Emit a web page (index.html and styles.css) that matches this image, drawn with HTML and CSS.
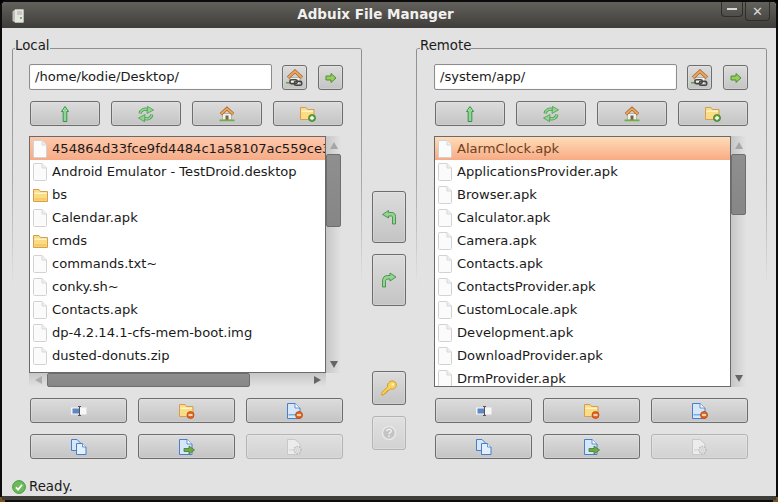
FILE: index.html
```html
<!DOCTYPE html>
<html lang="en">

<head>
    <meta charset="UTF-8">
    <title>Adbuix File Manager</title>
    <link rel="stylesheet" href="styles.css">
</head>

<body>
    <!-- icon set, used through <use> below -->
    <svg class="icon_defs" xmlns="http://www.w3.org/2000/svg">
        <symbol id="i_file" viewBox="0 0 14 18">
            <path d="M1 .5H9L13.500 5V16.500a1 1 0 0 1-1 1H1.500a1 1 0 0 1-1-1V1.500a1 1 0 0 1 .5-1z" fill="#fbfbfb" stroke="#d2d2d2"/>
            <path d="M9 .5V5H13.500" fill="#efefef" stroke="#d8d8d8"/>
        </symbol>
        <symbol id="i_folder" viewBox="0 0 15 14">
            <path d="M.5 1.500H6L7.500 3.500H14.500V13.500H.5z" fill="#f9dc84" stroke="#d49f52"/>
            <path d="M1.500 4.500H13.500V6H1.500z" fill="#fff3c8"/>
            <path d="M1.500 10H13.500V12.500H1.500z" fill="#f5cb62"/>
        </symbol>
        <symbol id="i_home" viewBox="0 0 16 16">
            <path d="M3.500 7.500H12.500V14H3.500z" fill="#f2f0ea" stroke="#b5b1a6"/>
            <path d="M6.500 9.500H9.500V14H6.500z" fill="#7a644a"/>
            <path d="M1.800 8.200L8 2.500L14.200 8.200" fill="none" stroke="#a9652a" stroke-width="3.200"/>
            <path d="M2 8L8 2.600L14 8" fill="none" stroke="#eaa860" stroke-width="1.800"/>
            <path d="M.5 13.500H15.500V15.200H.5z" fill="#6fae4a"/>
        </symbol>
        <symbol id="i_home_link" viewBox="0 0 16 16">
            <path d="M3.500 7.500H12.500V14H3.500z" fill="#f2f0ea" stroke="#b5b1a6"/>
            <path d="M1.800 7.700L8 2L14.200 7.700" fill="none" stroke="#a9652a" stroke-width="3"/>
            <path d="M2 7.500L8 2.100L14 7.500" fill="none" stroke="#eaa860" stroke-width="1.700"/>
            <path d="M0 11.500H4V12.800H0z" fill="#5fa044"/>
            <rect x="3.500" y="9.500" width="6.500" height="3.500" rx="1.500" fill="none" stroke="#454545" stroke-width="1.400"/>
            <rect x="7.500" y="11" width="6.500" height="3.500" rx="1.500" fill="none" stroke="#454545" stroke-width="1.400"/>
        </symbol>
        <symbol id="i_right" viewBox="0 0 16 16">
            <path d="M3 6H8V3.500L13 8L8 12.500V10H3z" fill="#97cc5e" stroke="#4f8f33" stroke-linejoin="round"/>
        </symbol>
        <symbol id="i_up" viewBox="0 0 16 16">
            <path d="M8 .5L11.500 5.500H9.800V15.500H6.200V5.500H4.500z" fill="#b4e4b0" stroke="#2f8f45" stroke-linejoin="round"/>
            <path d="M8 3V15" stroke="#7cc888" stroke-width="1.200"/>
        </symbol>
        <symbol id="i_refresh" viewBox="0 0 16 16">
            <path d="M2.200 7.500C2.500 4.200 6 2.300 10 3.500" fill="none" stroke="#4a9e52" stroke-width="3.200"/>
            <path d="M2.200 7.500C2.500 4.200 6 2.300 10 3.500" fill="none" stroke="#93d48e" stroke-width="1.600"/>
            <path d="M9.500 .3L15.500 4L9 7.500z" fill="#93d48e" stroke="#4a9e52" stroke-width=".8" stroke-linejoin="round"/>
            <path d="M13.800 8.500C13.500 11.800 10 13.700 6 12.500" fill="none" stroke="#4a9e52" stroke-width="3.200"/>
            <path d="M13.800 8.500C13.500 11.800 10 13.700 6 12.500" fill="none" stroke="#93d48e" stroke-width="1.600"/>
            <path d="M6.500 15.700L.5 12L7 8.500z" fill="#93d48e" stroke="#4a9e52" stroke-width=".8" stroke-linejoin="round"/>
        </symbol>
        <symbol id="i_folder_add" viewBox="0 0 16 16">
            <path d="M.5 1.500H6L7.500 3.500H14V13.500H.5z" fill="#f9dc84" stroke="#d49f52"/>
            <path d="M1.500 4.500H13V6H1.500z" fill="#fff3c8"/>
            <circle cx="12" cy="12" r="3.500" fill="#63a845" stroke="#3f7f2b" stroke-width=".8"/>
            <path d="M10 12H14M12 10V14" stroke="#fff" stroke-width="1.300"/>
        </symbol>
        <symbol id="i_folder_del" viewBox="0 0 16 16">
            <path d="M.5 1.500H6L7.500 3.500H14V13.500H.5z" fill="#f9dc84" stroke="#d49f52"/>
            <path d="M1.500 4.500H13V6H1.500z" fill="#fff3c8"/>
            <circle cx="11.500" cy="12" r="3.500" fill="#e8661e" stroke="#b5480f" stroke-width=".8"/>
            <path d="M9.500 12H13.500" stroke="#fff" stroke-width="1.400"/>
        </symbol>
        <symbol id="i_rename" viewBox="0 0 16 16">
            <path d="M0 4.500H15.500V11.500H0z" fill="#f6f6f6"/>
            <path d="M1.500 5.500H8V10.500H1.500z" fill="#5f86c4"/>
            <path d="M7 3.500H10M8.500 3.500V12.500M7 12.500H10" stroke="#555" fill="none"/>
        </symbol>
        <symbol id="i_doc_del" viewBox="0 0 16 16">
            <path d="M.5 .5H8L13 5V15.500H.5z" fill="#d6e7fa" stroke="#4a7fc8"/>
            <path d="M1.500 11H11V12.500H1.500z" fill="#79ade4"/>
            <path d="M8 .5V5H13" fill="#f5f9ff" stroke="#4a7fc8" stroke-width=".8"/>
            <circle cx="12" cy="12" r="3.500" fill="#e8661e" stroke="#b5480f" stroke-width=".8"/>
            <path d="M10 12H14" stroke="#fff" stroke-width="1.400"/>
        </symbol>
        <symbol id="i_copy" viewBox="0 0 16 16">
            <path d="M.5 .5H6L9.500 4V11.500H.5z" fill="#d6e7fa" stroke="#4a7fc8"/>
            <path d="M5.500 4.500H11.500L15 8V15.500H5.500z" fill="#e2effc" stroke="#4a7fc8"/>
            <path d="M11.500 4.500V8H15" fill="#f5f9ff" stroke="#4a7fc8" stroke-width=".8"/>
        </symbol>
        <symbol id="i_doc_move" viewBox="0 0 16 16">
            <path d="M.5 .5H8L13 5V15.500H.5z" fill="#d6e7fa" stroke="#4a7fc8"/>
            <path d="M8 .5V5H13" fill="#f5f9ff" stroke="#4a7fc8" stroke-width=".8"/>
            <path d="M5 9.500H10V7L15.500 11L10 15V12.500H5z" fill="#73a84a" stroke="#3f7f2b" stroke-width=".8" stroke-linejoin="round"/>
        </symbol>
        <symbol id="i_doc_gear" viewBox="0 0 16 16">
            <path d="M.5 .5H8L13 5V15.500H.5z" fill="#ececec" stroke="#c8c8c8"/>
            <circle cx="10.500" cy="11" r="3.500" fill="#e2e2e2" stroke="#bdbdbd" stroke-width="1.500" stroke-dasharray="1.500 1"/>
            <circle cx="10.500" cy="11" r="1.200" fill="#f2f2f2" stroke="#c4c4c4" stroke-width=".7"/>
            <path d="M2 11H6" stroke="#cfcfcf"/>
        </symbol>
        <symbol id="i_key" viewBox="0 0 16 16">
            <path d="M.8 12.500L6.500 7C6 4 8 1.500 10.500 1C13.500 .6 15.500 2.800 15.300 5.300C15 8 12.500 10 9.500 8.800L8 10.300H6.500V11.800H5V13.300H3.500L2.500 15H.8z" fill="#f8d25e" stroke="#d39a2a" stroke-linejoin="round"/>
            <circle cx="11.800" cy="4.500" r="1.300" fill="#fff3c0"/>
        </symbol>
        <symbol id="i_help" viewBox="0 0 16 16">
            <circle cx="8" cy="8" r="6.500" fill="#c4c4c4" stroke="#e8e8e8" stroke-width="1.500"/>
            <path d="M5.800 6.300C5.800 4.900 6.800 4.200 8 4.200S10.200 5 10.200 6.200C10.200 7.700 8 7.700 8 9.300" fill="none" stroke="#efefef" stroke-width="1.500"/>
            <path d="M7.200 10.500H8.800V12H7.200z" fill="#efefef"/>
        </symbol>
        <symbol id="i_turn_left" viewBox="0 0 16 16">
            <path d="M7.500 1.500L1.500 5.500L7.500 9V7H10.500C11 7 11.500 7.500 11.500 8V15H14.500V7.500C14.500 5 13 3.500 11 3.500H7.500z" fill="#93d48e" stroke="#37853f" stroke-width=".8" stroke-linejoin="round"/>
        </symbol>
        <symbol id="i_turn_right" viewBox="0 0 16 16">
            <path d="M9 1L15 5L9 9V7H7C5.500 7 4.500 8 4.500 9.500V15H1.500V9C1.500 5.500 3.500 3.500 6.500 3.500H9z" fill="#93d48e" stroke="#37853f" stroke-width=".8" stroke-linejoin="round"/>
        </symbol>
        <symbol id="i_ok" viewBox="0 0 16 16">
            <circle cx="8" cy="8" r="7.300" fill="#6cbb5a" stroke="#3f8f3a"/>
            <path d="M4.500 8.500L7 11L11.500 5.500" fill="none" stroke="#fff" stroke-width="2"/>
        </symbol>
        <symbol id="i_app" viewBox="0 0 12 14">
            <path d="M.5 2.500L3 .5H11.500V13.500H3L.5 12z" fill="#c2c2bd"/>
            <path d="M3 .5H11.500V13.500H3z" fill="#e6e6e1"/>
            <path d="M5 3H10M5 5H10" stroke="#a9a9a4"/>
            <path d="M8 8H10V10H8z" fill="#7fae6a"/>
        </symbol>
    </svg>

    <div class="window">
        <div class="titlebar">
            <svg class="app_icon"><use href="#i_app"/></svg>
            <div class="title">Adbuix File Manager</div>
            <div class="win_btn win_min"><span class="min_glyph"></span></div>
            <div class="win_btn win_close">&#10005;</div>
        </div>

        <div class="main">
            <section class="group">
                <div class="group_title">Local</div>
                <div class="path_row">
                    <div class="path_entry">/home/kodie/Desktop/</div>
                    <button class="btn small_btn"><svg class="ic_link"><use href="#i_home_link"/></svg></button>
                    <button class="btn small_btn"><svg class="ic"><use href="#i_right"/></svg></button>
                </div>
                <div class="nav_row">
                    <button class="btn"><svg class="ic"><use href="#i_up"/></svg></button>
                    <button class="btn"><svg class="ic"><use href="#i_refresh"/></svg></button>
                    <button class="btn"><svg class="ic"><use href="#i_home"/></svg></button>
                    <button class="btn"><svg class="ic"><use href="#i_folder_add"/></svg></button>
                </div>
                <div class="browser">
                    <div class="list">
                        <div class="row row_sel_local"><svg class="ic_file"><use href="#i_file"/></svg>454864d33fce9fd4484c1a58107ac559ce30</div>
                        <div class="row"><svg class="ic_file"><use href="#i_file"/></svg>Android Emulator - TestDroid.desktop</div>
                        <div class="row"><svg class="ic_folder"><use href="#i_folder"/></svg>bs</div>
                        <div class="row"><svg class="ic_file"><use href="#i_file"/></svg>Calendar.apk</div>
                        <div class="row"><svg class="ic_folder"><use href="#i_folder"/></svg>cmds</div>
                        <div class="row"><svg class="ic_file"><use href="#i_file"/></svg>commands.txt~</div>
                        <div class="row"><svg class="ic_file"><use href="#i_file"/></svg>conky.sh~</div>
                        <div class="row"><svg class="ic_file"><use href="#i_file"/></svg>Contacts.apk</div>
                        <div class="row"><svg class="ic_file"><use href="#i_file"/></svg>dp-4.2.14.1-cfs-mem-boot.img</div>
                        <div class="row"><svg class="ic_file"><use href="#i_file"/></svg>dusted-donuts.zip</div>
                    </div>
                    <div class="vscroll">
                        <div class="arrow_box_v"><span class="arrow arrow_up"></span></div>
                        <div class="thumb" style="height: 73px"></div>
                        <div class="spacer"></div>
                        <div class="arrow_box_v"><span class="arrow arrow_down"></span></div>
                    </div>
                    <div class="hscroll">
                        <div class="arrow_box_h"><span class="arrow arrow_left"></span></div>
                        <div class="thumb" style="width: 203px"></div>
                        <div class="spacer"></div>
                        <div class="arrow_box_h"><span class="arrow arrow_right"></span></div>
                    </div>
                </div>
                <div class="action_row">
                    <button class="btn"><svg class="ic"><use href="#i_rename"/></svg></button>
                    <button class="btn"><svg class="ic"><use href="#i_folder_del"/></svg></button>
                    <button class="btn"><svg class="ic"><use href="#i_doc_del"/></svg></button>
                    <button class="btn"><svg class="ic"><use href="#i_copy"/></svg></button>
                    <button class="btn"><svg class="ic"><use href="#i_doc_move"/></svg></button>
                    <button class="btn btn_off"><svg class="ic"><use href="#i_doc_gear"/></svg></button>
                </div>
            </section>

            <div class="middle">
                <button class="btn mid_btn"><svg class="ic"><use href="#i_turn_left"/></svg></button>
                <button class="btn mid_btn"><svg class="ic"><use href="#i_turn_right"/></svg></button>
                <button class="btn square_btn first_square"><svg class="ic"><use href="#i_key"/></svg></button>
                <button class="btn btn_off square_btn"><svg class="ic"><use href="#i_help"/></svg></button>
            </div>

            <section class="group group_remote">
                <div class="group_title">Remote</div>
                <div class="path_row">
                    <div class="path_entry">/system/app/</div>
                    <button class="btn small_btn"><svg class="ic_link"><use href="#i_home_link"/></svg></button>
                    <button class="btn small_btn"><svg class="ic"><use href="#i_right"/></svg></button>
                </div>
                <div class="nav_row">
                    <button class="btn"><svg class="ic"><use href="#i_up"/></svg></button>
                    <button class="btn"><svg class="ic"><use href="#i_refresh"/></svg></button>
                    <button class="btn"><svg class="ic"><use href="#i_home"/></svg></button>
                    <button class="btn"><svg class="ic"><use href="#i_folder_add"/></svg></button>
                </div>
                <div class="browser">
                    <div class="list">
                        <div class="row row_sel_remote"><svg class="ic_file"><use href="#i_file"/></svg>AlarmClock.apk</div>
                        <div class="row"><svg class="ic_file"><use href="#i_file"/></svg>ApplicationsProvider.apk</div>
                        <div class="row"><svg class="ic_file"><use href="#i_file"/></svg>Browser.apk</div>
                        <div class="row"><svg class="ic_file"><use href="#i_file"/></svg>Calculator.apk</div>
                        <div class="row"><svg class="ic_file"><use href="#i_file"/></svg>Camera.apk</div>
                        <div class="row"><svg class="ic_file"><use href="#i_file"/></svg>Contacts.apk</div>
                        <div class="row"><svg class="ic_file"><use href="#i_file"/></svg>ContactsProvider.apk</div>
                        <div class="row"><svg class="ic_file"><use href="#i_file"/></svg>CustomLocale.apk</div>
                        <div class="row"><svg class="ic_file"><use href="#i_file"/></svg>Development.apk</div>
                        <div class="row"><svg class="ic_file"><use href="#i_file"/></svg>DownloadProvider.apk</div>
                        <div class="row"><svg class="ic_file"><use href="#i_file"/></svg>DrmProvider.apk</div>
                    </div>
                    <div class="vscroll">
                        <div class="arrow_box_v"><span class="arrow arrow_up"></span></div>
                        <div class="thumb" style="height: 61px"></div>
                        <div class="spacer"></div>
                        <div class="arrow_box_v"><span class="arrow arrow_down"></span></div>
                    </div>
                </div>
                <div class="action_row">
                    <button class="btn"><svg class="ic"><use href="#i_rename"/></svg></button>
                    <button class="btn"><svg class="ic"><use href="#i_folder_del"/></svg></button>
                    <button class="btn"><svg class="ic"><use href="#i_doc_del"/></svg></button>
                    <button class="btn"><svg class="ic"><use href="#i_copy"/></svg></button>
                    <button class="btn"><svg class="ic"><use href="#i_doc_move"/></svg></button>
                    <button class="btn btn_off"><svg class="ic"><use href="#i_doc_gear"/></svg></button>
                </div>
            </section>
        </div>

        <div class="statusbar">
            <svg class="ic_status"><use href="#i_ok"/></svg>
            <span>Ready.</span>
        </div>
        <div class="bottom_edge"></div>
    </div>
    <span class="grip grip_left"></span>
    <span class="grip grip_right"></span>
</body>

</html>
```
FILE: styles.css
```css
* {
    box-sizing: border-box;
}

html, body {
    margin: 0;
    height: 100%;
    background: #000;
}

body {
    position: relative;
    font-family: "DejaVu Sans", sans-serif;
    font-size: 13.1px;
    color: #1a1a1a;
    overflow: hidden;
}

.icon_defs {
    display: none;
}

.window {
    width: 778px;
    height: 502px;
    display: flex;
    flex-direction: column;
    border: 2px solid #0c0c0c;
    border-radius: 6px 6px 0 0;
    background: #e2e2e2;
    overflow: hidden;
}

/* title bar */
.titlebar {
    flex: none;
    height: 26px;
    display: flex;
    align-items: flex-start;
    padding: 0 6px 0 10px;
    background: linear-gradient(to bottom, #62615c 0%, #3e3d39 100%);
}

.app_icon {
    flex: none;
    width: 12px;
    height: 14px;
    margin: 7px 6px 0 0;
}

.title {
    flex: 1;
    text-align: center;
    color: #f2f1ef;
    font-size: 13.5px;
    font-weight: bold;
    line-height: 25px;
}

.win_btn {
    flex: none;
    display: flex;
    align-items: center;
    justify-content: center;
    border: 1px solid #2f2e2b;
    border-top: 0;
    border-radius: 0 0 4px 4px;
    color: #d8d8d6;
}

.win_min {
    width: 22px;
    height: 15px;
    margin-right: 2px;
}

.min_glyph {
    display: block;
    width: 10px;
    height: 2px;
    background: #d8d8d6;
}

.win_close {
    width: 25px;
    height: 19px;
    font-size: 13px;
}

/* main area */
.main {
    flex: 1;
    display: grid;
    grid-template-columns: 350px 54px 351px;
    padding: 20px 0 0 10px;
}

.group {
    height: 423px;
    padding-left: 17px;
    border-top: 1px solid #8f8f8f;
    border-radius: 3px 3px 0 0;
    background-image: linear-gradient(to bottom, #8f8f8f 0%, #a8a8a8 55%, rgba(168, 168, 168, 0) 100%), linear-gradient(to bottom, #8f8f8f 0%, #a8a8a8 55%, rgba(168, 168, 168, 0) 100%);
    background-size: 1px 237px;
    background-position: left top, right top;
    background-repeat: no-repeat;
}

.group_remote {
    padding-left: 18px;
}

.group_title {
    display: table;
    margin: -11px 0 0 -14px;
    background: #e2e2e2;
    font-size: 13.33px;
    line-height: 16px;
    height: 16px;
}

.group_remote .group_title {
    margin-left: -14px;
}

.path_row {
    display: flex;
    align-items: flex-end;
    gap: 10px;
    width: 314px;
    margin-top: 10px;
}

.path_entry {
    width: 243px;
    height: 26px;
    padding-left: 5px;
    border: 1px solid #8d8d8d;
    border-radius: 2px;
    background: #fff;
    line-height: 24px;
    box-shadow: inset 0 0 0 1px #fafafa;
}

.path_row .small_btn:last-child {
    margin-left: 1px;
}

.btn {
    display: flex;
    align-items: center;
    justify-content: center;
    height: 25px;
    padding: 0;
    border: 1px solid #6d6d6d;
    border-radius: 3px;
    background: linear-gradient(to bottom, #dcdcdc 0%, #c4c4c4 100%);
    box-shadow: inset 0 0 0 1px rgba(255, 255, 255, 0.18);
}

.btn_off {
    border-color: #b4b4b4;
    background: linear-gradient(to bottom, #e0e0e0 0%, #d2d2d2 100%);
}

.small_btn {
    flex: none;
    width: 25px;
}

.nav_row {
    display: grid;
    grid-template-columns: repeat(4, 70px);
    gap: 11px;
    margin: 11px 0 10px 1px;
}

.browser {
    display: grid;
    grid-template-columns: 297px 15px;
    grid-template-rows: minmax(0, 1fr) auto;
    width: 312px;
    height: 251px;
    margin-bottom: 11px;
}

.list {
    overflow: hidden;
    border: 1px solid #6a6a6a;
    background: #fff;
    white-space: nowrap;
}

.row {
    display: flex;
    align-items: center;
    height: 23px;
    padding-left: 3px;
    overflow: hidden;
}

.row_sel_local {
    background: linear-gradient(to bottom, #fdc8ab 0%, #f6ab87 100%);
}

.row_sel_remote {
    background: linear-gradient(to bottom, #ffdcb8 0%, #f7ab85 100%);
    color: #6e4020;
}

.ic_file {
    flex: none;
    width: 14px;
    height: 18px;
    margin-right: 5px;
}

.ic_folder {
    flex: none;
    width: 15px;
    height: 14px;
    margin-right: 4px;
}

.vscroll {
    display: flex;
    flex-direction: column;
    align-items: stretch;
    background: linear-gradient(to right, #c6c6c6 0%, #e2e2e2 100%);
}

.hscroll {
    grid-column: 1;
    display: flex;
    height: 14px;
    background: linear-gradient(to bottom, #c6c6c6 0%, #e2e2e2 100%);
}

.spacer {
    flex: 1;
}

.thumb {
    flex: none;
    border: 1px solid #6e6e6e;
    border-radius: 2px;
    background: linear-gradient(to bottom, #8f8f8f 0%, #868686 100%);
}

.arrow_box_v {
    flex: none;
    height: 18px;
    display: flex;
    align-items: center;
    justify-content: center;
}

.arrow_box_h {
    flex: none;
    width: 18px;
    display: flex;
    align-items: center;
    justify-content: center;
}

.arrow {
    display: block;
    width: 0;
    height: 0;
    border-style: solid;
    border-color: transparent;
}

.arrow_up {
    border-width: 0 4px 7px;
    border-bottom-color: #a6a6a6;
}

.arrow_down {
    border-width: 7px 4px 0;
    border-top-color: #666;
}

.arrow_left {
    border-width: 4px 7px 4px 0;
    border-right-color: #adadad;
}

.arrow_right {
    border-width: 4px 0 4px 7px;
    border-left-color: #666;
}

.action_row {
    display: grid;
    grid-template-columns: repeat(3, 97px);
    gap: 11px;
    margin-left: 1px;
}

.ic {
    width: 16px;
    height: 16px;
}

.ic_link {
    width: 18px;
    height: 18px;
}

/* middle column */
.middle {
    display: flex;
    flex-direction: column;
    align-items: center;
    gap: 11px;
    padding-top: 143px;
}

.mid_btn {
    width: 34px;
    height: 52px;
}

.square_btn {
    width: 34px;
    height: 34px;
}

.first_square {
    margin-top: 54px;
}

/* status */
.statusbar {
    flex: none;
    height: 22px;
    display: flex;
    align-items: center;
    gap: 3px;
    padding: 3px 0 0 10px;
    font-size: 13.33px;
}

.ic_status {
    width: 14px;
    height: 14px;
}

.bottom_edge {
    flex: none;
    height: 4px;
    background: #3e3d39;
}

/* resize corners over the window frame */
.grip {
    position: absolute;
    bottom: 0;
    width: 5px;
    height: 5px;
    border-bottom: 2px solid #7a5420;
}

.grip_left {
    left: 0;
    border-left: 2px solid #7a5420;
}

.grip_right {
    right: 0;
    border-right: 2px solid #7a5420;
}
```
